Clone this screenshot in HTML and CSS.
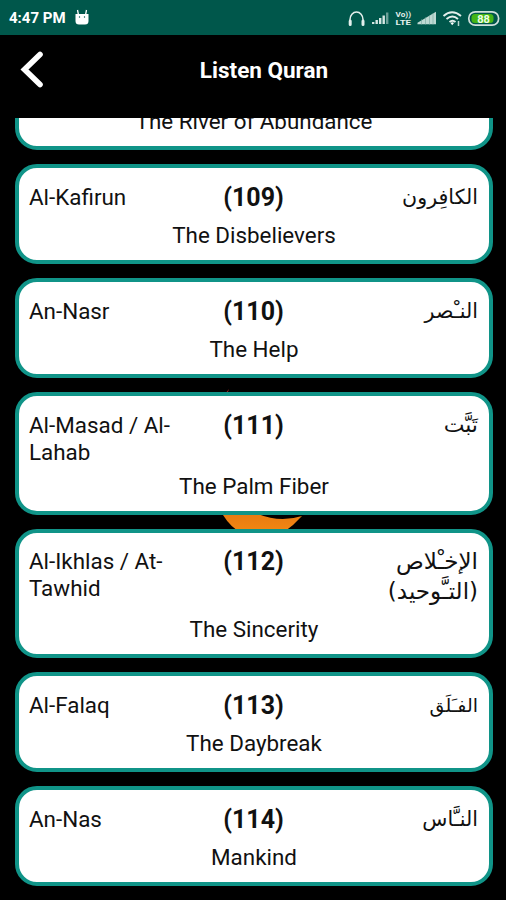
FILE: index.html
```
<!DOCTYPE html>
<html lang="en">
<head>
<meta charset="utf-8">
<title>Listen Quran</title>
<link rel="stylesheet" href="styles.css">
</head>
<body>
<div class="statusbar">
  <span class="time">4:47 PM</span>
  <svg class="robot" width="14" height="17" viewBox="0 0 14 17"><path d="M.5 5h13v7q0 3.500-3.500 3.500H4q-3.500 0-3.500-3.500z" fill="#fff"/><path d="M2.500 1l1 5M11.500 1l-1 5" stroke="#fff" stroke-width="1.300"/><circle cx="4.500" cy="8" r=".7" fill="#00574b"/><circle cx="9.500" cy="8" r=".7" fill="#00574b"/></svg>
  <svg class="indicators" width="158" height="24" viewBox="345 5 158 24">
    <path d="M350 23v-4.500a6.500 7.500 0 0 1 13 0V23" fill="none" stroke="#e3efec" stroke-width="1.500"/>
    <path d="M350.200 20v3.500M363 20v3.500" stroke="#e3efec" stroke-width="3" stroke-linecap="round"/>
    <g fill="#d5e7e3"><path d="M372 21h2.400v2H372zM375.500 19h2.400v4h-2.400zM379 17h2.400v6H379zM382.500 14.500h2.400V23h-2.400z"/><path d="M386 11.500h2.400V23H386z" opacity=".5"/></g>
    <g class="volte"><text x="395.500" y="16" textLength="15.500" lengthAdjust="spacingAndGlyphs">Vo))</text><text x="395.500" y="24.300" textLength="15.500" lengthAdjust="spacingAndGlyphs">LTE</text></g>
    <path d="M417.500 23.300v-1.500L436 10.700v12.600z" fill="#bdd8d2"/><path d="M421.500 18v6M425.500 16v8M429.500 14v10M433 12v12" stroke="#649c92" stroke-width=".5"/>
    <g fill="none" stroke="#e3efec" stroke-width="1.900"><path d="M443.500 15q8.500-7.500 17.500 0M446.500 18q6-5 11.500 0M449.500 21q3-2.500 6 0"/></g>
    <path d="M450.500 22q2-1.500 3.500 0l-1.800 2.200z" fill="#fff"/><path d="M458.500 20v5" stroke="#b5d5ce" stroke-width="1.500"/>
    <rect x="468.800" y="10.800" width="29.800" height="13.400" rx="6.500" fill="#00574b" stroke="#cfe0dc" stroke-width="1.700"/>
    <rect x="471.500" y="13" width="22" height="9" rx="3.500" fill="#43b516"/>
    <text class="battery" x="483.500" y="21.500" text-anchor="middle">88</text>
  </svg>
</div>
<header class="appbar">
  <svg class="back" width="26" height="40" viewBox="0 0 26 40"><path d="M21 4.500L5.500 19.500L21 34.500" fill="none" stroke="#fff" stroke-width="5.600" stroke-linecap="round"/></svg>
  <h1>Listen Quran</h1>
</header>
<main class="list">
  <svg class="moon" width="90" height="160" viewBox="215 380 90 160"><defs><linearGradient id="glow" x2="0" y2="1"><stop stop-color="#a01c1c"/><stop offset=".3" stop-color="#d95a15"/><stop offset=".86" stop-color="#e77b12"/><stop offset="1" stop-color="#f58a12"/></linearGradient></defs><path d="M229 389C190 435 202 492 223 515Q231 528 242 533Q262 538 284 532Q294 525 302 516Q280 523 258 514C226 500 212 435 229 389Z" fill="url(#glow)"/></svg>
  <section class="card first"><div class="row"></div><p>The River of Abundance</p></section>
  <section class="card"><div class="row"><span>Al-Kafirun</span><b>(109)</b><span class="ar" dir="rtl">الكافِرون</span></div><p>The Disbelievers</p></section>
  <section class="card"><div class="row"><span>An-Nasr</span><b>(110)</b><span class="ar" dir="rtl">النـْصر</span></div><p>The Help</p></section>
  <section class="card"><div class="row"><span>Al-Masad / Al-Lahab</span><b>(111)</b><span class="ar medium" dir="rtl">تَبَّت</span></div><p>The Palm Fiber</p></section>
  <section class="card"><div class="row"><span>Al-Ikhlas / At-Tawhid</span><b>(112)</b><span class="ar wide" dir="rtl">الإخـْلاص<br>(التـَّوحيد)</span></div><p>The Sincerity</p></section>
  <section class="card"><div class="row"><span>Al-Falaq</span><b>(113)</b><span class="ar narrow" dir="rtl">الفـَلَق</span></div><p>The Daybreak</p></section>
  <section class="card"><div class="row"><span>An-Nas</span><b>(114)</b><span class="ar" dir="rtl">النـَّاس</span></div><p>Mankind</p></section>
</main>
</body>
</html>
```
FILE: styles.css
```
* { box-sizing: border-box; }
body { margin: 0; height: 900px; overflow: hidden; background: #000; font-family: Roboto, "Noto Sans", sans-serif; display: flex; flex-direction: column; }
.statusbar { height: 35px; flex: none; background: #00574b; display: flex; align-items: center; padding: 0 3px 0 9px; color: #fff; }
.time { font-size: 15px; font-weight: 700; width: 66px; white-space: nowrap; }
.indicators { margin-left: auto; }
.volte text { font: 700 7.5px Roboto, sans-serif; fill: #e3efec; }
.battery { font: 700 11px Roboto, sans-serif; fill: #efffe8; }
.appbar { height: 83px; flex: none; display: grid; grid-template-columns: 50px 1fr 44px; padding: 0 3px 13px 19px; align-items: center; color: #fff; }
h1 { margin: 0; font-size: 22.5px; font-weight: 700; text-align: center; }
.list { flex: 1; min-height: 0; overflow: hidden; position: relative; display: flex; flex-direction: column; gap: 14px; padding: 0 13.5px 0 14.5px; }
.moon { position: absolute; left: 215px; top: 262px; }
.card { position: relative; flex: none; min-height: 100px; background: #fff; border: 4px solid #109488; border-radius: 22px; padding: 14.5px 10.5px 11px; color: #111; font-size: 22.4px; line-height: 27px; }
.card.first { margin-top: -67.7px; }
.row { display: grid; grid-template-columns: 150px 1fr 150px; min-height: 30px; }
.row span { padding-top: 1px; margin-bottom: -2px; }
b { font-size: 25px; line-height: 30px; text-align: center; font-weight: 700; }
.row .ar { font-family: "DejaVu Sans", sans-serif; font-size: 20.6px; line-height: 30px; padding: 0; margin: -1px 0 1px; text-align: start; }
.row .medium { font-size: 22px; }
.row .wide { font-size: 23px; }
.row .narrow { font-size: 19px; }
p { margin: 9px 0 0 1px; text-align: center; line-height: 27px; }
```
